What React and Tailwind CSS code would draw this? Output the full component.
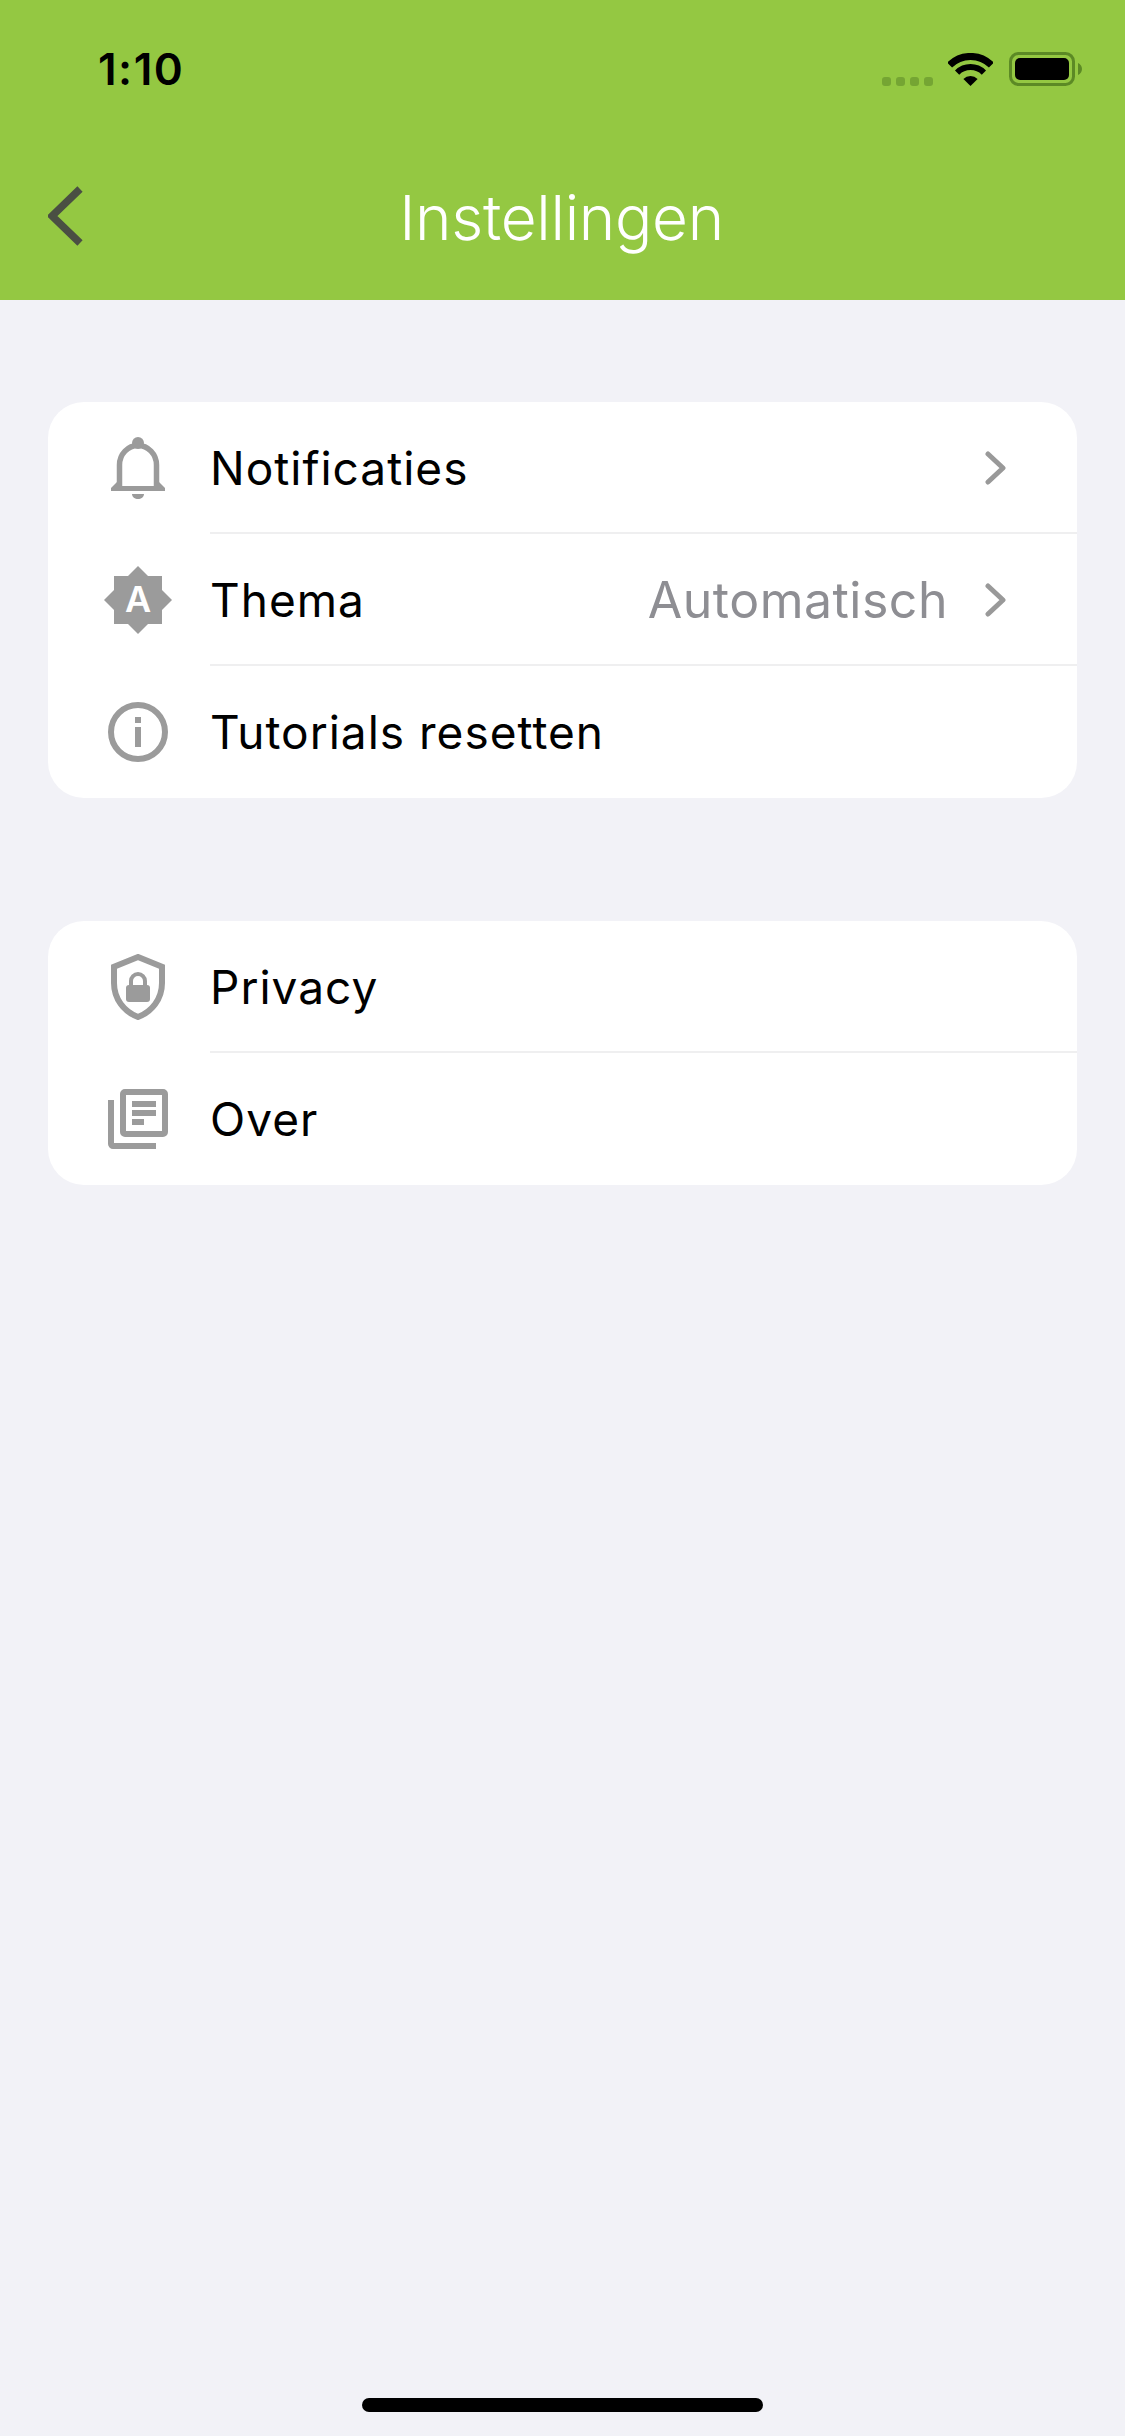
function BellIcon() {
  return (
    <svg width="54" height="62" viewBox="0 0 54 62" fill="#9b9b9b">
      <circle cx="27" cy="6" r="6" />
      <path d="M8.500 50V28C8.500 17 17 8.500 27 8.500S45.500 17 45.500 28V50" fill="none" stroke="#9b9b9b" strokeWidth="5.500" />
      <path d="M0 54V51L8 43V49H46V43L54 51V54Z" />
      <path d="M21 57H33C33 60 30 62 27 62S21 60 21 57Z" />
    </svg>
  )
}

function ThemeIcon() {
  return (
    <svg width="68" height="68" viewBox="0 0 68 68" fill="#9b9b9b">
      <rect x="10" y="10" width="48" height="48" />
      <path d="M34 0L68 34L34 68L0 34Z" />
      <text x="34" y="46" textAnchor="middle" fill="#fff" fontSize="36" fontWeight="600" fontFamily="Inter, sans-serif">
        A
      </text>
    </svg>
  )
}

function InfoIcon() {
  return (
    <svg width="60" height="60" viewBox="0 0 60 60" fill="#9b9b9b">
      <circle cx="30" cy="30" r="27" fill="none" stroke="#9b9b9b" strokeWidth="6" />
      <rect x="27" y="15" width="6" height="6" />
      <rect x="27" y="25" width="6" height="20" />
    </svg>
  )
}

function ShieldIcon() {
  return (
    <svg width="54" height="66" viewBox="0 0 54 66" fill="#9b9b9b">
      <path d="M27 3L3 12.800V29C3 45 13 57.500 27 63C41 57.500 51 45 51 29V12.800Z" fill="none" stroke="#9b9b9b" strokeWidth="6" />
      <rect x="15" y="31" width="24" height="17" rx="3" />
      <path d="M20 33V27A7 7 0 0 1 34 27V33" fill="none" stroke="#9b9b9b" strokeWidth="4" />
    </svg>
  )
}

function BooksIcon() {
  return (
    <svg width="60" height="60" viewBox="0 0 60 60" fill="#9b9b9b">
      <path d="M3 11V55C3 56 4 57 5 57H48" fill="none" stroke="#9b9b9b" strokeWidth="6" />
      <rect x="15" y="3" width="42" height="42" rx="2" fill="none" stroke="#9b9b9b" strokeWidth="6" />
      <rect x="24" y="12" width="24" height="6" />
      <rect x="24" y="21" width="24" height="6" />
      <rect x="24" y="30" width="12" height="6" />
    </svg>
  )
}

function Chevron() {
  return (
    <svg width="21" height="34" viewBox="0 0 21 34" fill="none" stroke="#999999" strokeWidth="5" strokeLinecap="round" strokeLinejoin="round">
      <path d="M3 3L18 17L3 31" />
    </svg>
  )
}

function Row({ icon, label, value, chevron, last }) {
  return (
    <div className="h-[132px] flex items-center">
      <div className="w-[90px] ml-[45px] mr-[27px] flex justify-center shrink-0">{icon}</div>
      <div className={`flex-1 h-full flex items-center pr-[71px] ${last ? '' : 'border-b-2 border-[#efeff0] pt-[2px]'}`}>
        <span className="flex-1 text-[46px] font-[370] tracking-[1px] text-black">{label}</span>
        {value && <span className="text-[50px] font-[370] tracking-[0.5px] text-[#8e8e93] mr-[37px]">{value}</span>}
        {chevron && <Chevron />}
      </div>
    </div>
  )
}

export default function App() {
  return (
    <div className="h-[2436px] flex flex-col bg-[#f2f2f7] font-['Inter',sans-serif]">
      <header className="h-[300px] bg-[#94c842] shrink-0">
        <div className="h-[132px] flex justify-between items-start pt-[52px] pl-[98px] pr-[43px]">
          <span className="text-[44px] leading-[34px] tracking-[1.500px] font-semibold text-black">1:10</span>
          <div className="flex items-end">
            <div className="flex gap-[5px] mr-[15px]">
              <span className="w-[9px] h-[9px] rounded-[3px] bg-[#75a533]" />
              <span className="w-[9px] h-[9px] rounded-[3px] bg-[#75a533]" />
              <span className="w-[9px] h-[9px] rounded-[3px] bg-[#75a533]" />
              <span className="w-[9px] h-[9px] rounded-[3px] bg-[#75a533]" />
            </div>
            <svg width="45" height="33" viewBox="0 0 45 33" fill="none" stroke="#000" className="mr-[16px]">
              <path d="M1.600 12.100A29.500 29.500 0 0 1 43.400 12.100" strokeWidth="7" />
              <path d="M9.100 19.600A19 19 0 0 1 35.900 19.600" strokeWidth="6" />
              <path d="M22.500 33L15.400 25.900A10 10 0 0 1 29.600 25.900Z" fill="#000" stroke="none" />
            </svg>
            <svg width="73" height="34" viewBox="0 0 73 34">
              <rect x="1.500" y="1.500" width="63" height="31" rx="8" fill="none" stroke="#5c8a25" strokeWidth="3" />
              <rect x="6" y="6" width="54" height="22" rx="5" fill="#000" />
              <path d="M69 11C71.500 12 73 14.500 73 17S71.500 22 69 23Z" fill="#5c8a25" />
            </svg>
          </div>
        </div>
        <div className="h-[168px] flex items-center relative">
          <svg width="36" height="60" viewBox="0 0 36 60" fill="none" stroke="#4a4f43" strokeWidth="7.500" className="ml-[48px]">
            <path d="M32 3L4 30L32 57" />
          </svg>
          <h1 className="absolute inset-x-0 text-center text-[62px] tracking-[-0.3px] font-[350] pt-[2px] pr-[2px] text-white">Instellingen</h1>
        </div>
      </header>

      <main className="px-[48px] pt-[102px] flex flex-col gap-[123px]">
        <section className="bg-white rounded-[36px] overflow-hidden">
          <Row icon={<BellIcon />} label="Notificaties" chevron />
          <Row icon={<ThemeIcon />} label="Thema" value="Automatisch" chevron />
          <Row icon={<InfoIcon />} label="Tutorials resetten" last />
        </section>
        <section className="bg-white rounded-[36px] overflow-hidden">
          <Row icon={<ShieldIcon />} label="Privacy" />
          <Row icon={<BooksIcon />} label="Over" last />
        </section>
      </main>

      <div className="mt-auto mb-[24px] mx-auto w-[401px] h-[14px] rounded-full bg-black" />
    </div>
  )
}
